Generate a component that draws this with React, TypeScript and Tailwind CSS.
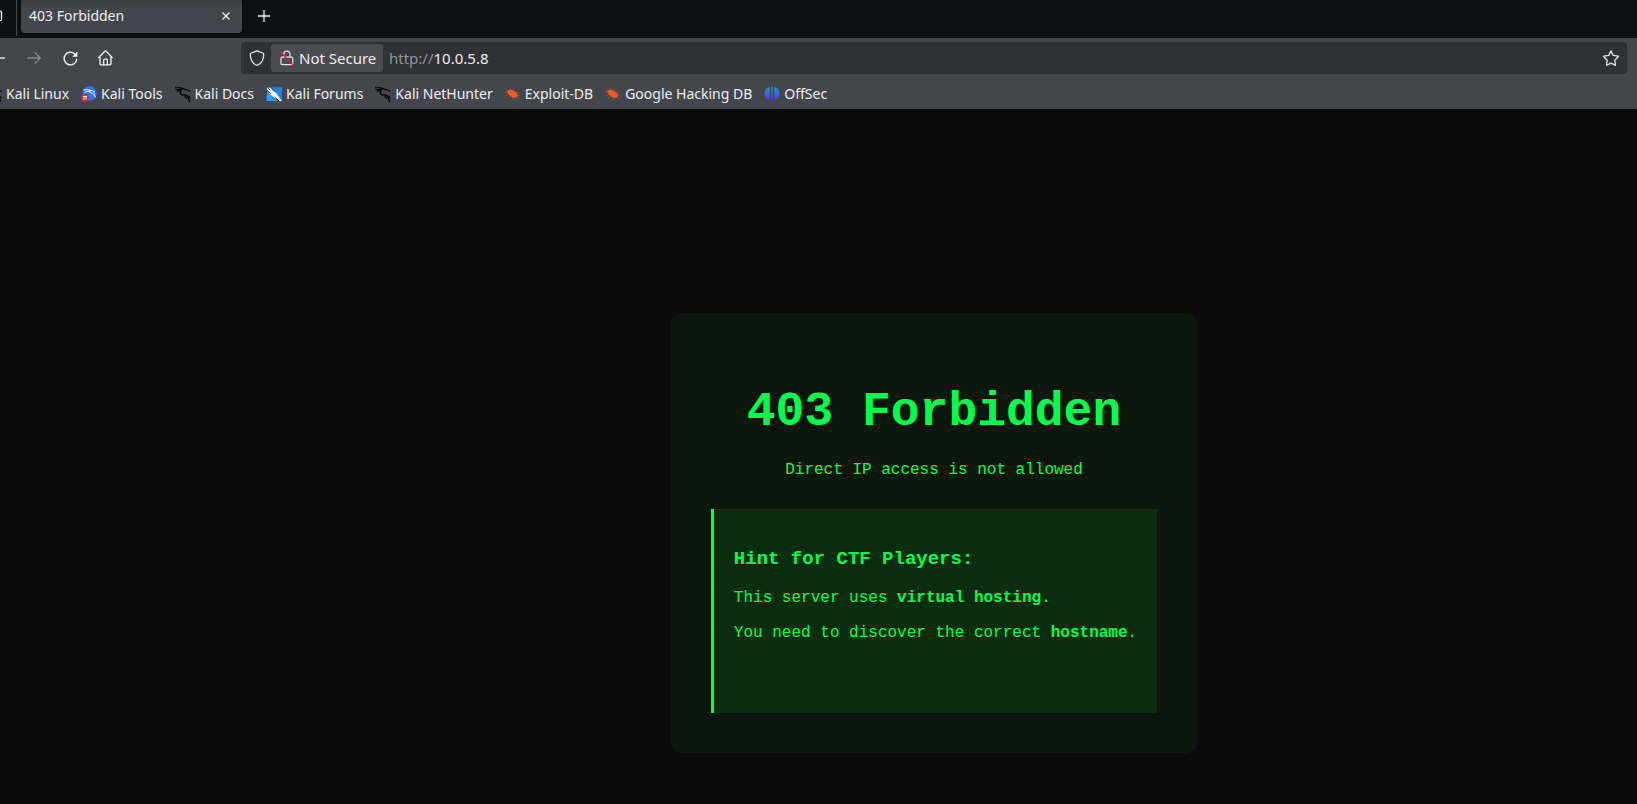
import type { ReactNode } from 'react';

function DragonIcon({ cropped = false }: { cropped?: boolean }) {
  return (
    <svg
      viewBox={cropped ? '14 0 2 16' : '0 0 16 16'}
      className={cropped ? 'h-4 w-0.5 shrink-0' : 'size-4 shrink-0'}
      fill="none"
      stroke="#08090b"
      strokeLinecap="round"
      strokeLinejoin="round"
      aria-hidden="true"
    >
      <path d="M.6 1.200C3 2 4.800 1.300 7 2.200M.8 3.200c2 .8 3.800 0 5.800.2M2 5.200c1.300-.2 2.500-.8 4-.9" strokeWidth="1.200" />
      <path d="M6 2.600c2-.4 3.800 0 5 1.200M6.400 3.800C4.800 5.400 4.800 8 7 8.700c2 .6 4.200-.3 5.600 1.300 1.200 1.400.4 3 1.900 5.200" strokeWidth="1.600" />
      <path d="M11 3.800c1.400-.3 2.600.3 4 1.600M10 9c-.3 1.600.5 2.600 2 3.300M13 10.300c.9.200 1.500.7 2.200 1.500" strokeWidth="1.200" />
    </svg>
  );
}

function ToolsIcon() {
  return (
    <svg viewBox="0 0 16 16" className="size-4 shrink-0" fill="none" aria-hidden="true">
      <circle cx="8.500" cy="7.500" r="7.200" fill="#2777ff" />
      <path d="M3 4c2.500-.9 4.600-.6 6.500.6M4 6c2-.8 3.600-.7 5-.2M8.300 4.800c.2 2.300 2.300 2.300 4 3 1.200.6 1.600 2 2 3.200M9.500 4.300c1.700 0 3 .7 4 1.900" stroke="#dbe9ff" strokeWidth="1.100" strokeLinecap="round" />
      <circle cx="3.900" cy="11.800" r="3.900" fill="#e8222e" />
      <path d="M1.800 10.400h4.200M3 10.500v3.400M4.900 10.500v3.400" stroke="#fff" strokeWidth="1" />
    </svg>
  );
}

function ForumsIcon() {
  return (
    <svg viewBox="0 0 16 16" className="size-4 shrink-0" fill="none" aria-hidden="true">
      <path d="M1 1.200h14.800v13.800H.4z" fill="#2383fb" />
      <path d="M1 6v9h8z" fill="#1ba3ff" />
      <path d="M.4 1 5.200 2.400l4.600 4.200 3.200 4.300 2.900 4.300-2.600-.2-4.600-3.300-4.100-2.600L1.800 5.200z" fill="#f7f7f7" />
      <path d="M0 .6l4.300 3.500M1 4.400l4 3.200M9 11.500l4 3.400M5.400 2.200l3.800 3.600" stroke="#14161a" strokeWidth=".8" />
    </svg>
  );
}

function BugIcon() {
  return (
    <svg viewBox="0 0 16 16" className="size-4 shrink-0" fill="none" aria-hidden="true">
      <path d="M3 4.600 .6 3.400M2.500 6.200.2 6M3.400 8.600 1 9.800M5.800 10.200 3.400 12.200M9 11.800l-.8 1.900M5.400 4 5.600 1.800M8.400 4.800l1.400-1.800M11.200 7.200l2.800-.6M12.400 9.200l2.400.2M12 11.200l1.800 1.500" stroke="#a84d33" strokeWidth=".9" />
      <ellipse cx="7.600" cy="7.700" rx="5.800" ry="3.200" transform="rotate(31 7.600 7.700)" fill="#f05a28" />
    </svg>
  );
}

function OffSecIcon() {
  return (
    <svg viewBox="0 0 16 16" className="size-4 shrink-0" aria-hidden="true">
      <defs>
        <linearGradient id="offsec" x1="0" y1="0" x2="0" y2="1">
          <stop offset="0" stopColor="#10a3b8" />
          <stop offset=".5" stopColor="#3c65dc" />
          <stop offset="1" stopColor="#6420d0" />
        </linearGradient>
      </defs>
      <path d="M5.800.8v13.800C2.600 13.500.4 11 .4 7.700S2.600 1.900 5.800.8zM7.300.3h1.400v15.400H7.300zM10.200.8c3.200 1.100 5.400 3.600 5.400 6.900s-2.200 5.800-5.400 6.900z" fill="url(#offsec)" />
    </svg>
  );
}

const bookmarks: { label: string; icon: ReactNode }[] = [
  { label: 'Kali Linux', icon: <DragonIcon cropped /> },
  { label: 'Kali Tools', icon: <ToolsIcon /> },
  { label: 'Kali Docs', icon: <DragonIcon /> },
  { label: 'Kali Forums', icon: <ForumsIcon /> },
  { label: 'Kali NetHunter', icon: <DragonIcon /> },
  { label: 'Exploit-DB', icon: <BugIcon /> },
  { label: 'Google Hacking DB', icon: <BugIcon /> },
  { label: 'OffSec', icon: <OffSecIcon /> },
];

function TabStrip() {
  return (
    <div className="flex h-[38px] items-start bg-[#0e0f13]">
      <button aria-label="Recent browsing" className="flex h-8 w-4 shrink-0 items-center">
        <svg viewBox="0 0 3 12" className="h-3 w-[3px]" fill="none" stroke="#f4f4f5" strokeWidth="1.300" aria-hidden="true">
          <path d="M-4 1.200h4.500a1 1 0 0 1 1 1v7.400a1 1 0 0 1-1 1H-4" />
        </svg>
      </button>
      <div className="mr-1 h-9 w-px bg-[#4a4b50]" />
      <div className="flex h-[33px] w-[221px] items-center justify-between rounded-b bg-[#44464e] bg-linear-to-b from-[#3a3c43] to-[#44464e] to-25% px-2 pb-0.5">
        <button className="text-sm">403 Forbidden</button>
        <button aria-label="Close tab" className="flex size-4 items-center justify-center">
          <svg viewBox="0 0 8 8" className="size-2" stroke="#f4f4f5" strokeWidth="1.200" aria-hidden="true">
            <path d="m.5.5 7 7m0-7-7 7" />
          </svg>
        </button>
      </div>
      <button aria-label="New tab" className="ml-4 flex h-8 w-3 items-center">
        <svg viewBox="0 0 12 12" className="size-3" stroke="#f4f4f5" strokeWidth="1.300" aria-hidden="true">
          <path d="M6 0v12M0 6h12" />
        </svg>
      </button>
    </div>
  );
}

function Toolbar() {
  return (
    <div className="flex h-10 items-center pr-[10px]">
      <button aria-label="Back" className="w-[27px]">
        <svg viewBox="0 0 6 16" className="h-4 w-1.5" stroke="#f4f4f5" strokeWidth="1.300" aria-hidden="true">
          <path d="M0 8h5" />
        </svg>
      </button>
      <button aria-label="Forward" className="w-9" disabled>
        <svg viewBox="0 0 14 14" className="size-3.5" fill="none" stroke="#85878c" strokeWidth="1.300" strokeLinecap="round" strokeLinejoin="round" aria-hidden="true">
          <path d="M.7 7h12.400M7.700 1.400 13.300 7l-5.600 5.600" />
        </svg>
      </button>
      <button aria-label="Reload" className="w-[35px]">
        <svg viewBox="0 0 15 15" className="size-[15px]" fill="none" stroke="#f4f4f5" strokeWidth="1.400" strokeLinecap="round" aria-hidden="true">
          <path d="M13.700 8.200a6.300 6.300 0 1 1-2-5.300l1.200 1.200" />
          <path d="M14.400.6v5.200H9.200z" fill="#f4f4f5" stroke="none" />
        </svg>
      </button>
      <button aria-label="Home" className="w-[143px]">
        <svg viewBox="0 0 16 16" className="size-4" fill="none" stroke="#f4f4f5" strokeWidth="1.300" strokeLinecap="round" strokeLinejoin="round" aria-hidden="true">
          <path d="M.7 7.600 6.800 1.300q.7-.7 1.400 0l6.100 6.300M2 6.700v7.100q0 1 1 1h9q1 0 1-1V6.700" />
          <path d="M5.600 14.500v-4.300q0-1 1-1h1.800q1 0 1 1v4.300" />
        </svg>
      </button>
      <div className="flex h-8 flex-1 items-center rounded bg-[#303136] pl-2">
        <button aria-label="Tracking protection" className="w-[22px]">
          <svg viewBox="0 0 16 16" className="size-4" fill="none" stroke="#e4e4e7" strokeWidth="1.300" strokeLinejoin="round" aria-hidden="true">
            <path d="M8 .8 13.700 3q1 .4 1 1.400c0 5.200-2 8.700-5.800 10.600q-.9.4-1.800 0C3.300 13.100 1.300 9.600 1.300 4.400q0-1 1-1.400z" />
          </svg>
        </button>
        <button className="flex h-7 w-28 items-center gap-1 rounded-[3px] bg-[#4b4c50] pl-2 text-[15px] leading-5 whitespace-nowrap">
          <svg viewBox="0 0 16 16" className="size-4 shrink-0" fill="none" aria-hidden="true">
            <path d="M4.800 7V4.200a3.100 3.100 0 0 1 6.200 0V7M3 7.200h9.800q1 0 1 1v5.500q0 1-1 1H3q-1 0-1-1V8.200q0-1 1-1z" stroke="#e4e4e7" strokeWidth="1.200" />
            <path d="m1.200 1.700 13 13.400" stroke="#e5174a" strokeWidth="1.300" />
          </svg>
          Not Secure
        </button>
        <div className="ml-1.5 flex-1 text-[15px] leading-5">
          <span className="text-[#929397]">http://</span>10.0.5.8
        </div>
        <button aria-label="Bookmark this page" className="mr-2">
          <svg viewBox="0 0 16 16" className="block size-4" fill="none" stroke="#e4e4e7" strokeWidth="1.300" strokeLinejoin="round" aria-hidden="true">
            <path d="M8 .9l2.200 4.500 4.900.8q.4.2.1.6l-3.400 3.500.7 4.700q0 .4-.4.2L8 13.100l-4.100 2.100q-.4.200-.4-.2l.7-4.700L.8 6.800q-.3-.4.1-.6l4.900-.8z" />
          </svg>
        </button>
      </div>
    </div>
  );
}

function Bookmarks() {
  return (
    <nav aria-label="Bookmarks" className="flex h-[31px] items-center gap-3">
      {bookmarks.map(({ label, icon }) => (
        <a key={label} href="#" className="flex shrink-0 items-center gap-1 text-sm whitespace-nowrap">
          {icon}
          {label}
        </a>
      ))}
    </nav>
  );
}

export default function App() {
  return (
    <div className="flex min-h-screen flex-col overflow-x-hidden bg-[#0a0a0a]">
      <header className="bg-[#44464e] font-['Noto_Sans',sans-serif] text-[#eeeef0]">
        <TabStrip />
        <Toolbar />
        <Bookmarks />
      </header>
      <main className="flex flex-1 items-start justify-center pt-51 pb-12 pl-[231px] font-['Liberation_Mono',monospace] text-base leading-[18px] text-[#00ff4c]">
        <section className="rounded-[10px] bg-[#0b160c] p-10">
          <h1 className="mt-8 mb-[21px] text-center text-[48px] leading-[55px] font-bold">403 Forbidden</h1>
          <p className="text-center">Direct IP access is not allowed</p>
          <div className="mt-[30px] border-l-3 border-[#00ff4c] bg-[#0a2d10] px-5 pt-10 pb-[71px]">
            <h3 className="mb-[19px] text-[19px] leading-[21px] font-bold">Hint for CTF Players:</h3>
            <p className="mb-[17px]">
              This server uses <strong>virtual hosting</strong>.
            </p>
            <p>
              You need to discover the correct <strong>hostname</strong>.
            </p>
          </div>
        </section>
      </main>
    </div>
  );
}
